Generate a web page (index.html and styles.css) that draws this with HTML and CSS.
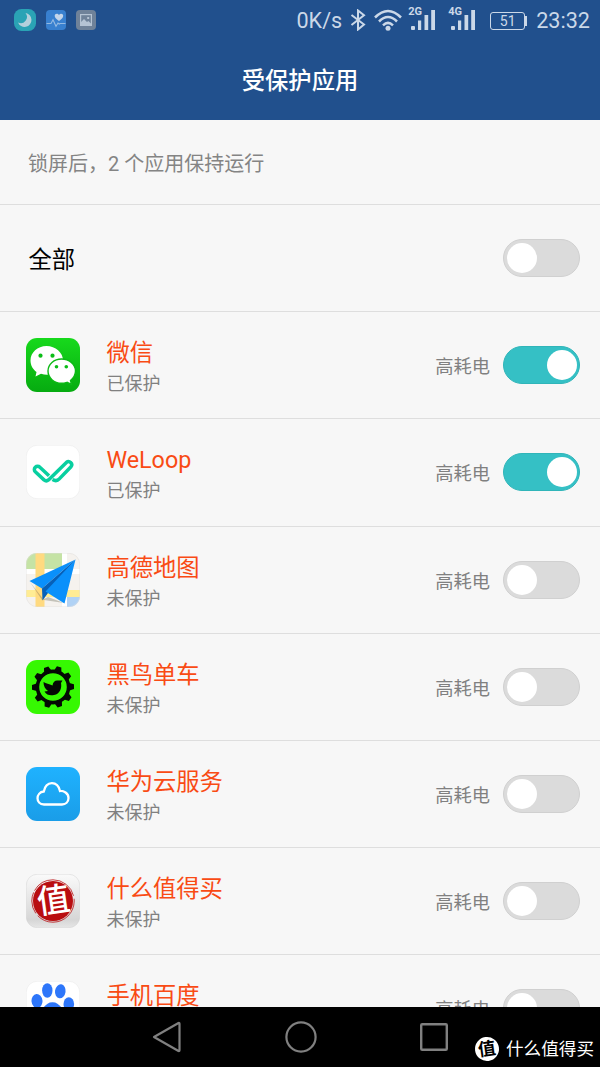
FILE: index.html
```html
<!DOCTYPE html>
<html lang="zh-CN">
<head>
  <meta charset="UTF-8">
  <meta name="viewport" content="width=device-width, initial-scale=1.0">
  <title>受保护应用</title>
  <link rel="stylesheet" href="styles.css">
</head>
<body>
  <header>
    <div class="status-bar">
      <div class="notifications">
        <svg width="22" height="22" viewBox="0 0 22 22">
          <rect width="22" height="22" rx="7.5" fill="#2aa3b5"/>
          <path d="M11.500 4A7 7 0 1 1 4 13.500A6.200 6.200 0 0 0 11.500 4Z" fill="#b3d0dc"/>
        </svg>
        <svg width="20" height="20" viewBox="0 0 20 20">
          <rect width="20" height="20" rx="4" fill="#3880cf"/>
          <path d="M13 11C10 8.800 8.700 7.500 8.700 5.800C8.700 3.400 11.800 3.100 13 5C14.200 3.100 17.200 3.400 17.200 5.800C17.200 7.500 16 8.800 13 11Z" fill="#c3d5ea"/>
          <path d="M.5 13.500H5L7 9.700L10 16.300L12 13L13.200 14L14.200 13.500H19.500" fill="none" stroke="#93b9e2" stroke-width="1.100"/>
        </svg>
        <svg width="20" height="20" viewBox="0 0 20 20">
          <rect width="20" height="20" rx="4" fill="#6f8299"/>
          <rect x="4.600" y="4.600" width="10.800" height="10.800" fill="none" stroke="#b5c3d3" stroke-width="1.200"/>
          <path d="M5 15V12L8 9L11 12L12.300 11L15 13.500V15Z" fill="#b5c3d3"/>
          <rect x="11.200" y="7" width="2" height="2" fill="#b5c3d3"/>
        </svg>
      </div>
      <div class="indicators">
        <span class="speed">0K/s</span>
        <svg class="bluetooth" width="16" height="22" viewBox="0 0 16 22">
          <path d="M1.500 6L14 15.500L8 20.500V1.500L14 6.200L1.500 16" fill="none" stroke="#cbd8e8" stroke-width="2"/>
        </svg>
        <svg class="wifi" width="28" height="22" viewBox="0 0 28 22">
          <g fill="none" stroke="#cbd8e8" stroke-width="2.500">
            <path d="M1 8.500Q14-4.500 27 8.500"/>
            <path d="M5 12.500Q14 3.500 23 12.500"/>
            <path d="M9 16.300Q14 11.500 19 16.300"/>
          </g>
          <circle cx="14" cy="19.300" r="2.500" fill="#cbd8e8"/>
        </svg>
        <div class="signal">
          <span>2G</span>
          <svg width="26" height="21" viewBox="0 0 26 21" fill="#cbd8e8">
            <rect x="1" y="16" width="4" height="4" rx="1"/>
            <rect x="8" y="10.500" width="3.200" height="9.500"/>
            <rect x="14.500" y="5" width="3.700" height="15"/>
            <rect x="21.200" y="0" width="3.800" height="20"/>
          </svg>
        </div>
        <div class="signal">
          <span>4G</span>
          <svg width="26" height="21" viewBox="0 0 26 21" fill="#cbd8e8">
            <rect x="1" y="16" width="4" height="4" rx="1"/>
            <rect x="8" y="10.500" width="3.200" height="9.500"/>
            <rect x="14.500" y="5" width="3.700" height="15"/>
            <rect x="21.200" y="0" width="3.800" height="20"/>
          </svg>
        </div>
        <div class="battery">51</div>
        <span class="clock">23:32</span>
      </div>
    </div>
    <h1>受保护应用</h1>
  </header>

  <main>
    <p class="summary">锁屏后，2 个应用保持运行</p>

    <div class="row all">
      <span class="all-label">全部</span>
      <div class="toggle"></div>
    </div>

    <div class="row">
      <svg class="icon" viewBox="0 0 54 54">
        <defs>
          <linearGradient id="green" x1="0" y1="0" x2="0" y2="1">
            <stop offset="0" stop-color="#17d91c"/>
            <stop offset="1" stop-color="#06ab10"/>
          </linearGradient>
        </defs>
        <rect width="54" height="54" rx="11" fill="url(#green)"/>
        <path d="M20.500 8C11.500 8 4.500 14.500 4.500 22.500C4.500 27.500 7 31.500 10.500 34L9.500 38.500L15 35.800C17 36.400 19 36.700 21 36.700C30 36.700 37 30.500 37 22.500C37 14.500 29.500 8 20.500 8Z" fill="#fff"/>
        <path d="M35.500 21C28 21 22 26.300 22 33C22 39.800 28 45.200 35.500 45.200C37.500 45.200 39 44.900 41 44.300L45.500 46.500L44.500 42.500C47.500 40 49.500 37 49.500 33C49.500 26.300 43 21 35.500 21Z" fill="#fff" stroke="#0cb915" stroke-width="1.400"/>
        <g fill="#0bbd17">
          <circle cx="14.500" cy="17.700" r="2.100"/>
          <circle cx="26.500" cy="17.700" r="2.100"/>
          <circle cx="30.500" cy="28.700" r="1.800"/>
          <circle cx="40.300" cy="28.700" r="1.800"/>
        </g>
      </svg>
      <div class="info">
        <div class="name">微信</div>
        <div class="state">已保护</div>
      </div>
      <span class="power">高耗电</span>
      <div class="toggle on"></div>
    </div>

    <div class="row">
      <svg class="icon" viewBox="0 0 54 54">
        <rect x=".25" y=".25" width="53.500" height="53.500" rx="11" fill="#fff" stroke="#e6e6e6" stroke-width=".5"/>
        <g fill="none" stroke="#08cfa0" stroke-width="3.500" stroke-linejoin="round">
          <path d="M23 30.800L13.900 22.200A3.200 3.200 0 0 0 9.300 26.800L18 34.900Q20.300 36.800 22.500 34.900L40.400 17.400A3.200 3.200 0 0 1 45 21.800L33.300 33.900Q30.500 37 26.500 34.500"/>
        </g>
      </svg>
      <div class="info">
        <div class="name">WeLoop</div>
        <div class="state">已保护</div>
      </div>
      <span class="power">高耗电</span>
      <div class="toggle on"></div>
    </div>

    <div class="row">
      <svg class="icon" viewBox="0 0 54 54">
        <defs>
          <clipPath id="tile"><rect width="54" height="54" rx="11"/></clipPath>
        </defs>
        <g clip-path="url(#tile)">
          <rect width="54" height="54" fill="#f5f2ee"/>
          <rect width="36" height="16" fill="#c5e3a5"/>
          <path d="M0 16H54V21H0ZM36 0H41V54H36Z" fill="#fff"/>
          <rect y="37" width="54" height="7" fill="#ffec94"/>
          <rect x="9.500" width="9" height="54" fill="#ffda80"/>
          <rect x="41" y="44" width="13" height="10" fill="#b0d2f5"/>
          <path d="M36 44H41V54H36Z" fill="#fff"/>
          <path d="M4 29L16 47L22 44L38 50L18 47Z" fill="#6b6b55" opacity=".35"/>
        </g>
        <rect x=".25" y=".25" width="53.500" height="53.500" rx="11" fill="none" stroke="#dedede" stroke-width=".5"/>
        <path d="M49.500 6.500L3.500 28L16 35.500Z" fill="#0a90fb"/>
        <path d="M49.500 6.500L16 35.500L16.500 47.500L22 40Z" fill="#0660b8"/>
        <path d="M49.500 6.500L19.500 38.500L38.500 50.500Z" fill="#0a90fb"/>
      </svg>
      <div class="info">
        <div class="name">高德地图</div>
        <div class="state">未保护</div>
      </div>
      <span class="power">高耗电</span>
      <div class="toggle"></div>
    </div>

    <div class="row">
      <svg class="icon" viewBox="0 0 54 54">
        <rect width="54" height="54" rx="11" fill="#36f802"/>
        <circle cx="27" cy="27" r="15.600" fill="none" stroke="#040804" stroke-width="3.600"/>
        <g fill="#040804">
          <path id="tooth" d="M23 11.500L24.700 6L29.300 6L31 11.500Z" transform="rotate(17 27 27)"/>
          <use href="#tooth" transform="rotate(36 27 27)"/>
          <use href="#tooth" transform="rotate(72 27 27)"/>
          <use href="#tooth" transform="rotate(108 27 27)"/>
          <use href="#tooth" transform="rotate(144 27 27)"/>
          <use href="#tooth" transform="rotate(180 27 27)"/>
          <use href="#tooth" transform="rotate(216 27 27)"/>
          <use href="#tooth" transform="rotate(252 27 27)"/>
          <use href="#tooth" transform="rotate(288 27 27)"/>
          <use href="#tooth" transform="rotate(324 27 27)"/>
        </g>
        <path d="M17.500 22C20 24 23 23.500 26.500 25.500C27 21.500 29.500 20 32 20.500L36.500 20.500L35 23C36 28 34 34 28 35C24 35.800 20.500 35 18.500 31.500L22 31C19 29 17.500 26 17.500 22Z" fill="#040804"/>
      </svg>
      <div class="info">
        <div class="name">黑鸟单车</div>
        <div class="state">未保护</div>
      </div>
      <span class="power">高耗电</span>
      <div class="toggle"></div>
    </div>

    <div class="row">
      <svg class="icon" viewBox="0 0 54 54">
        <defs>
          <linearGradient id="blue" x1="0" y1="0" x2="0" y2="1">
            <stop offset="0" stop-color="#1fb2ff"/>
            <stop offset="1" stop-color="#1a9de8"/>
          </linearGradient>
        </defs>
        <rect width="54" height="54" rx="11" fill="url(#blue)"/>
        <path d="M18 37.500C9.300 37.500 9.500 25.300 17.800 24.500C20 13.500 31.500 13.500 34 24C37.500 23.700 42.500 26 42.500 31C42.500 35 39.500 37.500 36 37.500Z" fill="none" stroke="#fff" stroke-width="2.300"/>
      </svg>
      <div class="info">
        <div class="name">华为云服务</div>
        <div class="state">未保护</div>
      </div>
      <span class="power">高耗电</span>
      <div class="toggle"></div>
    </div>

    <div class="row">
      <svg class="icon" viewBox="0 0 54 54">
        <defs>
          <linearGradient id="silver" x1="0" y1="0" x2="0" y2="1">
            <stop offset="0" stop-color="#fafafa"/>
            <stop offset=".85" stop-color="#d6d6d6"/>
            <stop offset="1" stop-color="#e6e6e6"/>
          </linearGradient>
        </defs>
        <rect x=".25" y=".25" width="53.500" height="53.500" rx="11" fill="url(#silver)" stroke="#d2d2d2" stroke-width=".5"/>
        <circle cx="27" cy="27" r="20" fill="#b90d10"/>
        <circle cx="27" cy="27" r="21.200" fill="none" stroke="#b90d10" stroke-width=".8" stroke-dasharray="50 3 22 2"/>
        <text class="stamp" x="27.500" y="38" transform="rotate(-8 27 27)">值</text>
      </svg>
      <div class="info">
        <div class="name">什么值得买</div>
        <div class="state">未保护</div>
      </div>
      <span class="power">高耗电</span>
      <div class="toggle"></div>
    </div>

    <div class="row">
      <svg class="icon" viewBox="0 0 54 54">
        <rect x=".25" y=".25" width="53.500" height="53.500" rx="11" fill="#fff" stroke="#e6e6e6" stroke-width=".5"/>
        <g fill="#2d76fa">
          <ellipse cx="21.300" cy="9.500" rx="5.200" ry="7.300"/>
          <ellipse cx="34.300" cy="10.300" rx="5.300" ry="7" transform="rotate(8 34.300 10.300)"/>
          <ellipse cx="11" cy="20" rx="5.500" ry="7" transform="rotate(-5 11 20)"/>
          <ellipse cx="42.800" cy="23" rx="5.300" ry="6.700"/>
          <path d="M26.500 21.300C20 21.300 18 27 13 31C5 38 10 48 18 47C24 46 29 46 35 47C43 48 48 38 40 31C35 27 33 21.300 26.500 21.300Z"/>
        </g>
      </svg>
      <div class="info">
        <div class="name">手机百度</div>
        <div class="state">未保护</div>
      </div>
      <span class="power">高耗电</span>
      <div class="toggle"></div>
    </div>
  </main>

  <nav>
    <svg width="30" height="32" viewBox="0 0 30 32">
      <path d="M2 16L26.500 2Q27.500 1.700 27.500 3V29Q27.500 30.300 26.500 30Z" fill="none" stroke="#808080" stroke-width="2.200" stroke-linejoin="round"/>
    </svg>
    <svg width="32" height="32" viewBox="0 0 32 32">
      <circle cx="16" cy="16" r="14.600" fill="none" stroke="#808080" stroke-width="2.200"/>
    </svg>
    <svg width="28" height="28" viewBox="0 0 28 28">
      <rect x="1.200" y="1.200" width="25.600" height="25.600" rx="1" fill="none" stroke="#808080" stroke-width="2.400"/>
    </svg>
    <div class="watermark">
      <span class="badge">值</span>
      <span>什么值得买</span>
    </div>
  </nav>
</body>
</html>
```
FILE: styles.css
```css
* {
  box-sizing: border-box;
}

body {
  margin: 0;
  height: 1067px;
  display: flex;
  flex-direction: column;
  overflow: hidden;
  font-family: Roboto, "Noto Sans CJK SC", sans-serif;
  background-color: #f7f7f7;
  color: #000;
}

svg {
  display: block;
  flex-shrink: 0;
}

header {
  height: 120px;
  flex-shrink: 0;
  background-color: #21508d;
  color: #fff;
}

.status-bar {
  display: flex;
  justify-content: space-between;
  height: 40px;
  padding: 0 10px 0 14px;
  color: #cbd8e8;
}

.notifications {
  display: flex;
  align-items: center;
  gap: 10px;
}

.indicators {
  display: flex;
  align-items: center;
}

.speed,
.clock {
  font-size: 21.6px;
  line-height: 40px;
  padding-top: 2px;
}

.bluetooth {
  margin-left: 8px;
}

.wifi {
  margin-left: 8px;
}

.signal {
  position: relative;
  margin-left: 8px;
}

.signal + .signal {
  margin-left: 14px;
}

.signal span {
  position: absolute;
  left: -2px;
  top: -4px;
  font-size: 11px;
  font-weight: 700;
  line-height: 12px;
}

.battery {
  position: relative;
  width: 35px;
  height: 18px;
  margin: 2px 11px 0 14px;
  border: 1.5px solid #cbd8e8;
  border-radius: 3px;
  font-size: 14px;
  line-height: 17px;
  text-align: center;
}

.battery::after {
  content: "";
  position: absolute;
  right: -3px;
  top: 3px;
  width: 2px;
  height: 10px;
  background-color: #cbd8e8;
}

h1 {
  margin: 0;
  padding-top: 2px;
  font-size: 23.3px;
  font-weight: 500;
  line-height: 78px;
  text-align: center;
}

main {
  flex: 1;
  min-height: 0;
  overflow: hidden;
}

.summary {
  height: 85px;
  margin: 0;
  padding: 2px 0 0 28px;
  border-bottom: 1px solid #dedede;
  color: #848484;
  font-size: 20px;
  line-height: 85px;
}

.row {
  display: flex;
  align-items: center;
  height: 107.2px;
  padding: 0 20px 0 26.4px;
  border-bottom: 1px solid #dedede;
}

.all-label {
  flex: 1;
  padding-left: 2px;
  font-size: 23.3px;
}

.icon {
  width: 54px;
  height: 54px;
}

.info {
  flex: 1;
  padding-top: 4px;
  margin-left: 26px;
}

.name {
  color: #f94b14;
  font-size: 23.3px;
  line-height: 34px;
}

.state {
  color: #808080;
  font-size: 18px;
  line-height: 28px;
}

.power {
  margin-right: 13px;
  color: #808080;
  font-size: 18.3px;
}

.toggle {
  display: flex;
  align-items: center;
  width: 77px;
  height: 38px;
  padding: 0 3px;
  border: 1px solid #d0d0d0;
  border-radius: 19px;
  background-color: #dbdbdb;
}

.toggle::before {
  content: "";
  width: 30px;
  height: 30px;
  border-radius: 50%;
  background-color: #fff;
}

.toggle.on {
  justify-content: flex-end;
  padding-right: 2px;
  border-color: #30b5b9;
  background-color: #35c0c5;
}

.stamp {
  fill: #fff;
  font-size: 33px;
  font-weight: 500;
  text-anchor: middle;
}

nav {
  position: relative;
  display: flex;
  align-items: center;
  justify-content: center;
  gap: 103px;
  height: 60px;
  padding-right: 1px;
  flex-shrink: 0;
  background-color: #000;
}

/* sits over the navigation bar */
.watermark {
  position: absolute;
  right: 6px;
  bottom: 6px;
  display: flex;
  align-items: center;
  gap: 7px;
  color: #fff;
  font-size: 17.6px;
  line-height: 24px;
}

.badge {
  width: 24px;
  height: 24px;
  border-radius: 50%;
  background-color: #fff;
  color: #000;
  font-weight: 700;
  text-align: center;
  transform: rotate(-8deg);
}
```
